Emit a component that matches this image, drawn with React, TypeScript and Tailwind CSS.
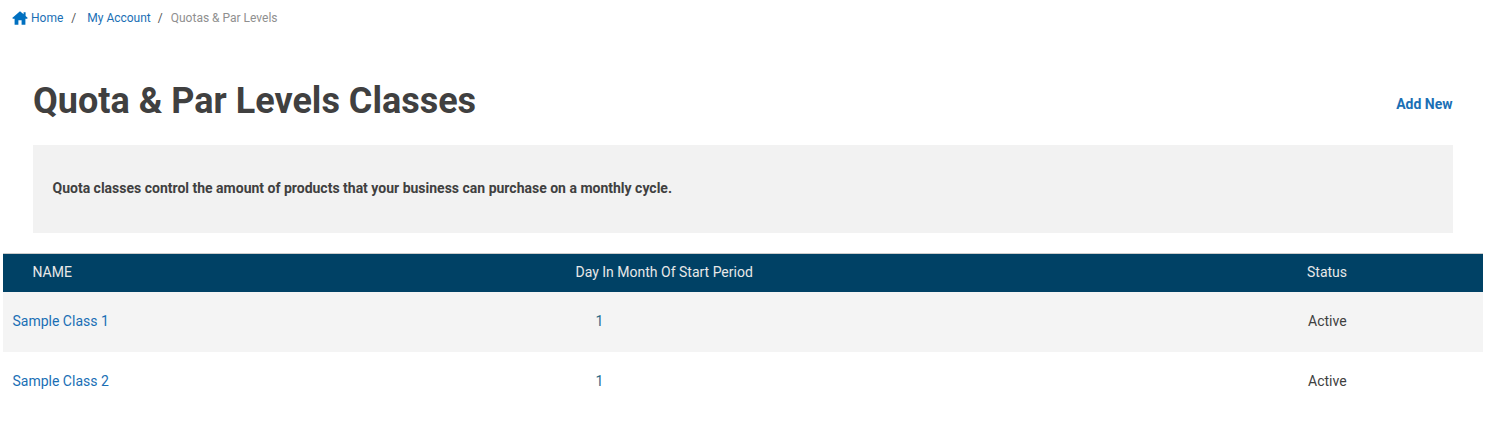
import { Fragment } from "react";

const rows = [
  { name: "Sample Class 1", day: 1, status: "Active" },
  { name: "Sample Class 2", day: 1, status: "Active" },
];

export default function App() {
  return (
    <div className="min-h-[439px] bg-white font-['Roboto',sans-serif] text-[#404040]">
      {/* breadcrumb */}
      <nav className="flex h-[35px] items-center pl-3 text-xs">
        <svg viewBox="0 0 16 14" className="h-[14px] w-[16px] fill-[#0070c0]">
          <path d="M8 0.2 L11.6 3.2 V1.2 H13.6 V4.9 L15.8 6.9 L15 7.7 H13.4 V13.8 H9.6 V9.3 H6.4 V13.8 H2.6 V7.7 H1 L0.2 6.9 Z" />
        </svg>
        <a className="ml-[3px] text-[#1a6fb5]">Home</a>
        <span className="ml-2 text-[#555]">/</span>
        <a className="ml-[11px] text-[#1a6fb5]">My Account</a>
        <span className="ml-[7px] text-[#555]">/</span>
        <span className="ml-[8px] text-[#8f8f8f]">Quotas &amp; Par Levels</span>
      </nav>

      {/* heading */}
      <div className="mt-[41px] flex items-center justify-between pl-[33px] pr-[33.5px]">
        <h1 className="text-[36px] leading-[50px] font-bold text-[#404040]">Quota &amp; Par Levels Classes</h1>
        <a className="mt-[6px] text-sm font-bold text-[#1a6fb5]">Add New</a>
      </div>

      {/* description */}
      <div className="mx-[33px] mt-[19px] flex h-[88px] items-center bg-[#f2f2f2] pl-[19.5px] pr-5 pb-[2px]">
        <p className="text-sm font-bold text-[#404040]">
          Quota classes control the amount of products that your business can purchase on a monthly cycle.
        </p>
      </div>

      {/* table */}
      <div className="mx-[3px] mt-[20px] grid w-[1480px] grid-cols-[573px_731px_176px] border-t border-[#cccccc] text-sm">
        <div className="flex h-[38px] items-center bg-[#004165] pb-[2px] pl-[29.5px] text-[#e8e8e8]">NAME</div>
        <div className="flex h-[38px] items-center bg-[#004165] pb-[2px] text-[#e8e8e8]">
          <span className="-ml-[0.5px]">Day In Month Of Start Period</span>
        </div>
        <div className="flex h-[38px] items-center bg-[#004165] pb-[2px] text-[#e8e8e8]">Status</div>
        {rows.map((row, i) => (
          <Fragment key={row.name}>
            <div className={`flex h-[60px] items-center pb-[2px] pl-[9.5px] text-[#1a6fb5] ${i === 0 ? "bg-[#f4f4f4]" : ""}`}>{row.name}</div>
            <div className={`flex h-[60px] items-center pb-[2px] pl-[19.5px] text-[#2b6c8c] ${i === 0 ? "bg-[#f4f4f4]" : ""}`}>{row.day}</div>
            <div className={`flex h-[60px] items-center pb-[2px] pl-px ${i === 0 ? "bg-[#f4f4f4]" : ""}`}>{row.status}</div>
          </Fragment>
        ))}
      </div>
    </div>
  );
}
